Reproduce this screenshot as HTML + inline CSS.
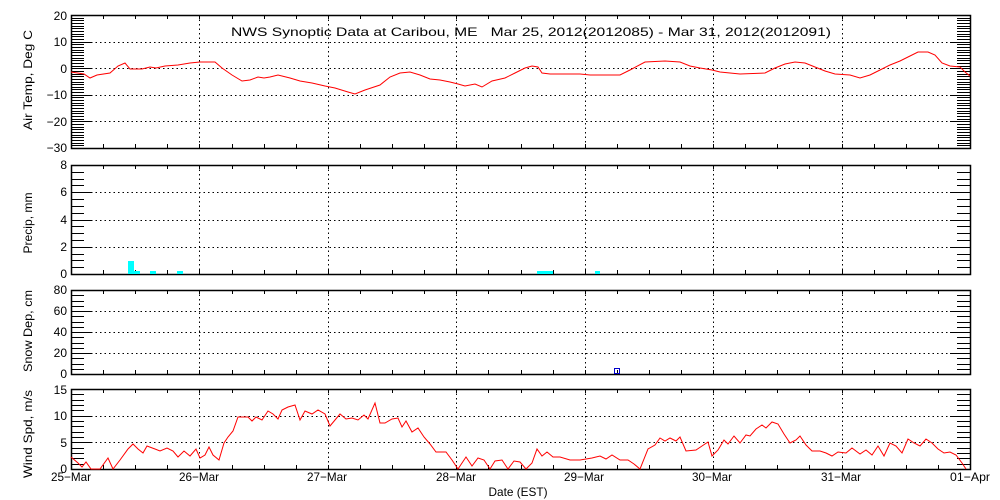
<!DOCTYPE html>
<html><head><meta charset="utf-8"><style>
html,body{margin:0;padding:0;background:#fff;width:1000px;height:500px;overflow:hidden}
svg{display:block}
text{font-family:"Liberation Sans",sans-serif;font-size:12px;fill:#000}
</style></head><body>
<svg id="s" width="1000" height="500" xmlns="http://www.w3.org/2000/svg">
<g id="g"></g>
<text x="231" y="36" font-size="14" textLength="600" lengthAdjust="spacingAndGlyphs" xml:space="preserve">NWS Synoptic Data at Caribou, ME   Mar 25, 2012(2012085) - Mar 31, 2012(2012091)</text>
<g text-anchor="end">
<text x="67" y="20">20</text><text x="67" y="46">10</text><text x="67" y="73">0</text><text x="67" y="99">−10</text><text x="67" y="126">−20</text><text x="67" y="152">−30</text>
<text x="67" y="169">8</text><text x="67" y="196">6</text><text x="67" y="224">4</text><text x="67" y="251">2</text><text x="67" y="278">0</text>
<text x="67" y="294">80</text><text x="67" y="315">60</text><text x="67" y="336">40</text><text x="67" y="357">20</text><text x="67" y="378">0</text>
<text x="67" y="394">15</text><text x="67" y="420">10</text><text x="67" y="447">5</text><text x="67" y="473">0</text>
</g>
<g text-anchor="middle" font-size="13">
<text transform="translate(32,80) rotate(-90)" textLength="100" lengthAdjust="spacingAndGlyphs">Air Temp, Deg C</text>
<text transform="translate(32,223) rotate(-90)" textLength="61" lengthAdjust="spacingAndGlyphs">Precip, mm</text>
<text transform="translate(32,331) rotate(-90)" textLength="82" lengthAdjust="spacingAndGlyphs">Snow Dep, cm</text>
<text transform="translate(32,434) rotate(-90)" textLength="88" lengthAdjust="spacingAndGlyphs">Wind Spd, m/s</text>
</g>
<g text-anchor="middle">
<text x="71" y="481" textLength="40" lengthAdjust="spacingAndGlyphs">25−Mar</text><text x="199" y="481" textLength="40" lengthAdjust="spacingAndGlyphs">26−Mar</text><text x="327" y="481" textLength="40" lengthAdjust="spacingAndGlyphs">27−Mar</text><text x="456" y="481" textLength="40" lengthAdjust="spacingAndGlyphs">28−Mar</text><text x="584" y="481" textLength="40" lengthAdjust="spacingAndGlyphs">29−Mar</text><text x="712" y="481" textLength="40" lengthAdjust="spacingAndGlyphs">30−Mar</text><text x="841" y="481" textLength="40" lengthAdjust="spacingAndGlyphs">31−Mar</text><text x="970" y="481" textLength="40" lengthAdjust="spacingAndGlyphs">01−Apr</text>
<text x="518" y="496" textLength="59" lengthAdjust="spacingAndGlyphs">Date (EST)</text>
</g>
<g fill="#00ffff">
<rect x="128" y="261" width="6" height="13"/><rect x="134" y="271" width="6" height="3"/><rect x="150" y="271" width="6" height="3"/><rect x="177" y="271" width="6" height="3"/><rect x="537" y="271" width="16" height="3"/><rect x="595" y="271" width="5" height="3"/>
</g>
<rect x="614.5" y="368.5" width="5" height="5" fill="none" stroke="#0000cc"/>
<polyline fill="none" stroke="#ff0000" stroke-width="1" points="71,72 84,74 90,78 97,75 110,73 118,66 125,63 130,69 142,69 150,67 156,68 165,66 178,65 190,63 200,62 215,62 222,68 232,75 242,81 250,80 258,77 264,78 270,77 278,75 290,78 300,81 312,83 325,86 335,88 348,92 355,94 365,90 380,85 390,77 400,73 410,72 420,75 430,79 440,80 450,82 458,84 465,86 475,84 482,87 492,81 505,78 515,73 525,68 532,66 538,67 542,73 550,74 580,74 590,75 620,75 630,70 645,62 665,61 680,62 690,66 700,68 712,70 720,72 740,74 765,73 775,68 785,64 795,62 805,63 815,67 825,71 835,74 850,75 860,78 870,75 880,70 890,65 900,61 910,56 918,52 928,52 935,55 942,63 950,66 960,67 965,72 970,76"/>
<polyline fill="none" stroke="#ff0000" stroke-width="1" points="71,457 78,463 82,467 86,462 91,469 100,469 108,458 113,469 120,460 128,449 133,444 138,449 143,453 147,446 155,449 160,451 167,448 173,451 178,457 184,451 190,456 196,449 200,458 205,455 209,447 213,455 219,460 224,443 228,437 233,431 238,417 248,417 252,421 256,417 262,420 268,411 273,414 278,419 282,410 288,407 295,405 300,420 305,411 312,414 318,410 325,414 330,426 335,420 340,414 346,419 352,418 358,420 364,415 368,419 375,403 380,423 385,423 392,419 398,418 402,427 406,421 412,432 418,428 424,437 430,444 436,452 446,452 452,460 458,469 462,463 466,457 472,466 478,458 484,460 490,469 495,461 502,460 508,469 514,461 520,462 526,469 532,463 537,449 542,456 547,452 553,457 560,457 570,460 580,460 592,458 600,456 606,459 612,455 620,460 628,460 634,464 640,469 648,449 655,445 660,438 665,441 670,438 676,441 680,437 686,451 696,450 702,446 708,442 712,456 718,450 724,440 728,444 734,436 740,443 746,435 750,436 756,429 762,425 766,428 772,422 778,424 784,434 790,443 796,440 800,436 806,445 812,451 820,451 826,453 832,456 838,452 846,453 852,448 860,454 866,450 872,455 878,446 884,456 890,443 896,446 902,453 908,439 914,443 920,446 926,439 932,443 938,449 944,453 950,452 956,455 962,463 966,469"/>
</svg>
<script>
var g=document.getElementById('g'),ns='http://www.w3.org/2000/svg';
function L(x1,y1,x2,y2,d){var l=document.createElementNS(ns,'line');l.setAttribute('x1',x1);l.setAttribute('y1',y1);l.setAttribute('x2',x2);l.setAttribute('y2',y2);l.setAttribute('stroke','#000');l.setAttribute('stroke-width',1);if(d)l.setAttribute('stroke-dasharray','1.5 3');g.appendChild(l);}
var X0=71,X1=970;
var P=[[15,148,50,[0.2,0.4,0.6,0.8]],[165,274,16,[0.25,0.5,0.75]],[290,374,16,[0.25,0.5,0.75]],[389,469,15,[1/3,2/3]]];
P.forEach(function(p){var t=p[0],b=p[1];
 var r=document.createElementNS(ns,'rect');r.setAttribute('x',X0+.5);r.setAttribute('y',t+.5);r.setAttribute('width',X1-X0);r.setAttribute('height',b-t);r.setAttribute('fill','none');r.setAttribute('stroke','#000');r.setAttribute('stroke-width',1.5);g.appendChild(r);
 for(var i=1;i<p[2];i++){var y=Math.round(t+(b-t)*i/p[2])+.5;L(X0,y,X0+13,y);L(X1-13,y,X1,y);}
 p[3].forEach(function(f){var y=Math.round(t+(b-t)*f)+.5;L(X0,y,X0+20,y);L(X0+20,y,X1-20,y,1);L(X1-20,y,X1,y);});
 for(var d=1;d<7;d++){var x=Math.round(X0+(X1-X0)*d/7)+.5;L(x,t,x,b,1);}
 for(var k=1;k<28;k++){var x=Math.round(X0+(X1-X0)*k/28)+.5;L(x,t,x,t+4);L(x,b-4,x,b);}
});
</script>
</body></html>
